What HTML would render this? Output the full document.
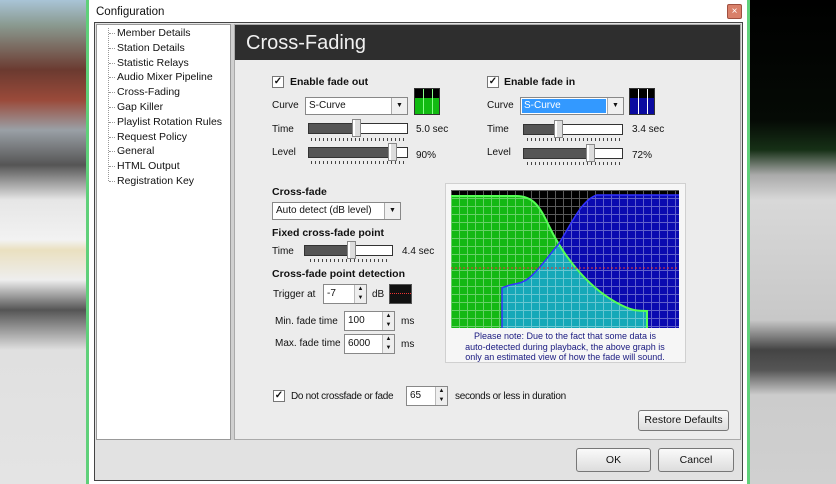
<!DOCTYPE html>
<html><head><style>
*{margin:0;padding:0;box-sizing:border-box}
body{width:836px;height:484px;overflow:hidden;position:relative;font-family:"Liberation Sans",sans-serif;font-size:10px;color:#111;background:#ccc}
.a{position:absolute}
.lb{position:absolute;white-space:nowrap;line-height:12px}
.b{font-weight:bold;font-size:10.5px}
.cb{position:absolute;width:12px;height:12px;border:1px solid #777;background:#fff;font-size:10px;line-height:10px;text-align:center;font-weight:bold}
.sel{position:absolute;height:18px;border:1px solid #888;background:#fff;padding-left:3px;line-height:16px}
.sel .dd{position:absolute;right:0;top:0;width:16px;height:16px;border-left:1px solid #aaa;background:#f0f0f0;font-size:7px;text-align:center;line-height:16px}
.tr{position:absolute;height:11px;border:1px solid #333;background:#fff}
.tr i{position:absolute;left:0;top:0;bottom:0;background:#555}
.th{position:absolute;width:9px;height:18px;background:#ddd;border:1px solid #888;box-shadow:inset 2px 0 #fff}
.tk{position:absolute;height:3px;background:repeating-linear-gradient(90deg,#444 0 1px,transparent 1px 4px)}
.spin{position:absolute;height:20px;border:1px solid #888;background:#fff;padding-left:3px;line-height:18px}
.spin .ar{position:absolute;right:0;top:0;width:12px;height:18px;background:#eee;border-left:1px solid #bbb;font-size:6px;line-height:9px;text-align:center}
.btn{position:absolute;border:1px solid #777;border-radius:3px;background:linear-gradient(#fafafa,#ddd);text-align:center;font-size:10.5px}
.sw{position:absolute;width:26px;height:27px;border:1px solid #333}
.tree div{position:relative;height:14.8px;line-height:14.8px}
.tree div:before{content:"";position:absolute;left:-8px;top:7px;width:6px;border-top:1px dotted #999}
</style></head><body>
<div class="a" style="left:0;top:0;width:88px;height:484px;background:linear-gradient(#a9c4d6 0,#8a9a90 25px,#6b3a30 70px,#9a4a3a 100px,#9aa0a6 130px,#555 165px,#e6e6e6 200px,#f2f2f2 240px,#eae0c0 250px,#eee 280px,#555 310px,#e0e0e0 350px,#e4e4e4 484px)"></div>
<div class="a" style="left:750px;top:0;width:86px;height:484px;background:linear-gradient(#000 0,#050a05 120px,#163016 150px,#aaa 175px,#d8d8d8 200px,#c8c8c8 320px,#444 350px,#555 370px,#ccc 395px,#d0d0d0 484px)"></div>
<div class="a" style="left:86px;top:0;width:664px;height:484px;background:#fff;border-left:3px solid #5fd07a;border-right:3px solid #5fd07a"></div>
<div class="lb" style="left:96px;top:6px;font-size:11.5px">Configuration</div>
<div class="a" style="left:727px;top:4px;width:15px;height:15px;background:#d9806a;border:1px solid #a05040;border-radius:2px;color:#fff;font-size:10px;text-align:center;line-height:13px">×</div>
<div class="a" style="left:94px;top:22px;width:649px;height:459px;border:1px solid #444;background:#e2e2e2"></div>
<div class="a" style="left:96px;top:24px;width:135px;height:416px;background:#fff;border:1px solid #999"></div>
<div class="a" style="left:231px;top:24px;width:3px;height:416px;background:#d0d0d0"></div>
<div class="a" style="left:234px;top:24px;width:507px;height:416px;background:#ececec;border:1px solid #aaa"></div>
<div class="a" style="left:235px;top:25px;width:505px;height:35px;background:#2e2e2e"></div>
<div class="lb" style="left:246px;top:31px;font-size:20px;line-height:24px;color:#f0f0f0">Cross-Fading</div>
<div class="a" style="left:108px;top:28px;width:1px;height:153px;border-left:1px dotted #999"></div>
<div class="a tree" style="left:117px;top:26px;font-size:10.5px">
<div>Member Details</div><div>Station Details</div><div>Statistic Relays</div><div>Audio Mixer Pipeline</div><div>Cross-Fading</div><div>Gap Killer</div><div>Playlist Rotation Rules</div><div>Request Policy</div><div>General</div><div>HTML Output</div><div>Registration Key</div></div>

<div class="cb" style="left:272px;top:76px">✓</div><div class="lb b" style="left:290px;top:76px">Enable fade out</div>
<div class="lb" style="left:272px;top:100px">Curve</div>
<div class="sel" style="left:305px;top:97px;width:103px">S-Curve<div class="dd">▼</div></div>
<div class="sw" style="left:414px;top:88px;background-image:linear-gradient(90deg,transparent 8px,#8f8 8px 9px,transparent 9px 17px,#8f8 17px 18px,transparent 18px),linear-gradient(#000 0 9px,#1b1 9px)"></div>
<div class="lb" style="left:272px;top:124px">Time</div>
<div class="tr" style="left:308px;top:123px;width:100px"><i style="width:46px"></i></div><div class="th" style="left:352px;top:119px"></div><div class="tk" style="left:311px;top:138px;width:94px"></div>
<div class="lb" style="left:416px;top:124px">5.0 sec</div>
<div class="lb" style="left:272px;top:147px">Level</div>
<div class="tr" style="left:308px;top:147px;width:100px"><i style="width:82px"></i></div><div class="th" style="left:388px;top:143px"></div><div class="tk" style="left:311px;top:161px;width:94px"></div>
<div class="lb" style="left:416px;top:150px">90%</div>

<div class="cb" style="left:487px;top:76px">✓</div><div class="lb b" style="left:504px;top:76px">Enable fade in</div>
<div class="lb" style="left:487px;top:100px">Curve</div>
<div class="sel" style="left:520px;top:97px;width:104px;padding:1px"><span style="display:block;width:84px;height:14px;background:#3399ff;color:#fff;line-height:14px;padding-left:2px">S-Curve</span><div class="dd">▼</div></div>
<div class="sw" style="left:629px;top:88px;background-image:linear-gradient(90deg,transparent 8px,#fff 8px 9px,transparent 9px 17px,#fff 17px 18px,transparent 18px),linear-gradient(#000 0 9px,#0a0aa0 9px)"></div>
<div class="lb" style="left:487px;top:124px">Time</div>
<div class="tr" style="left:523px;top:124px;width:100px"><i style="width:34px"></i></div><div class="th" style="left:554px;top:120px"></div><div class="tk" style="left:527px;top:138px;width:94px"></div>
<div class="lb" style="left:632px;top:124px">3.4 sec</div>
<div class="lb" style="left:487px;top:147px">Level</div>
<div class="tr" style="left:523px;top:148px;width:100px"><i style="width:66px"></i></div><div class="th" style="left:586px;top:144px"></div><div class="tk" style="left:527px;top:162px;width:94px"></div>
<div class="lb" style="left:632px;top:150px">72%</div>

<div class="lb b" style="left:272px;top:186px">Cross-fade</div>
<div class="sel" style="left:272px;top:202px;width:129px">Auto detect (dB level)<div class="dd">▼</div></div>
<div class="lb b" style="left:272px;top:227px">Fixed cross-fade point</div>
<div class="lb" style="left:272px;top:246px">Time</div>
<div class="tr" style="left:304px;top:245px;width:89px"><i style="width:44px"></i></div><div class="th" style="left:347px;top:241px"></div><div class="tk" style="left:310px;top:259px;width:80px"></div>
<div class="lb" style="left:402px;top:246px">4.4 sec</div>
<div class="lb b" style="left:272px;top:268px">Cross-fade point detection</div>
<div class="lb" style="left:273px;top:289px">Trigger at</div>
<div class="spin" style="left:323px;top:284px;width:44px">-7<div class="ar">▲<br>▼</div></div>
<div class="lb" style="left:372px;top:289px">dB</div>
<div class="a" style="left:389px;top:284px;width:23px;height:20px;background:#111;border:1px solid #555"><div style="margin-top:8px;border-top:1px dotted #e33"></div></div>
<div class="lb" style="left:275px;top:316px">Min. fade time</div>
<div class="spin" style="left:344px;top:311px;width:51px">100<div class="ar">▲<br>▼</div></div>
<div class="lb" style="left:401px;top:316px">ms</div>
<div class="lb" style="left:275px;top:338px">Max. fade time</div>
<div class="spin" style="left:344px;top:334px;width:51px">6000<div class="ar">▲<br>▼</div></div>
<div class="lb" style="left:401px;top:339px">ms</div>

<div class="a" style="left:445px;top:183px;width:241px;height:180px;background:#f6f6f6;border:1px solid #d0d0d0"></div>
<svg class="a" style="left:451px;top:190px" width="228" height="138" viewBox="0 0 228 138">
<defs><clipPath id="g"><path d="M0,138 L0,6 L65,6 C85,6 90,20 100,40 C115,70 140,100 170,115 C180,120 185,121 196,121 L196,138 Z"/></clipPath>
<pattern id="p" width="8" height="8" patternUnits="userSpaceOnUse"><path d="M0,0.5H8M0.5,0V8" stroke="#fff" stroke-opacity=".35" fill="none"/></pattern></defs>
<rect width="228" height="138" fill="#000"/>
<path d="M0,138 L0,6 L65,6 C85,6 90,20 100,40 C115,70 140,100 170,115 C180,120 185,121 196,121 L196,138 Z" fill="#14b814"/>
<path d="M51,138 L51,98 C60,93 70,95 78,88 C90,78 100,62 107,55 C120,35 130,10 146,5 L228,5 L228,138 Z" fill="#0a0ab0"/>
<path clip-path="url(#g)" d="M51,138 L51,98 C60,93 70,95 78,88 C90,78 100,62 107,55 C120,35 130,10 146,5 L228,5 L228,138 Z" fill="#15a8b8"/>
<rect width="228" height="138" fill="url(#p)"/>
<path d="M0,6 L65,6 C85,6 90,20 100,40 C115,70 140,100 170,115 C180,120 185,121 196,121 L196,138" fill="none" stroke="#5f5" stroke-width="2"/>
<path d="M51,138 L51,98 C60,93 70,95 78,88 C90,78 100,62 107,55 C120,35 130,10 146,5 L228,5" fill="none" stroke="#33f" stroke-width="1.5"/>
<line x1="0" y1="78" x2="228" y2="78" stroke="#e33" stroke-dasharray="2,2"/>
</svg>
<div class="a" style="left:447px;top:331px;width:236px;text-align:center;color:#1a1a80;font-size:9px;line-height:10.5px">Please note: Due to the fact that some data is<br>auto-detected during playback, the above graph is<br>only an estimated view of how the fade will sound.</div>

<div class="cb" style="left:273px;top:390px">✓</div>
<div class="lb" style="left:291px;top:391px;font-size:10px;letter-spacing:-0.3px">Do not crossfade or fade</div>
<div class="spin" style="left:406px;top:386px;width:42px">65<div class="ar">▲<br>▼</div></div>
<div class="lb" style="left:455px;top:391px;font-size:10px;letter-spacing:-0.3px">seconds or less in duration</div>
<div class="btn" style="left:638px;top:410px;width:91px;height:21px;line-height:19px">Restore Defaults</div>
<div class="btn" style="left:576px;top:448px;width:75px;height:24px;line-height:22px">OK</div>
<div class="btn" style="left:658px;top:448px;width:76px;height:24px;line-height:22px">Cancel</div>
</body></html>
